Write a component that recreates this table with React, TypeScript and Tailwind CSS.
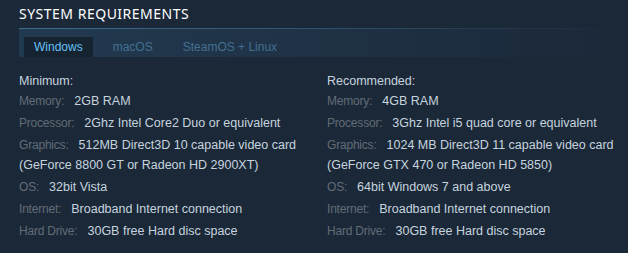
export default function App() {
  const min = [
    ["Memory:", "2GB RAM"],
    ["Processor:", "2Ghz Intel Core2 Duo or equivalent"],
    ["Graphics:", "512MB Direct3D 10 capable video card (GeForce 8800 GT or Radeon HD 2900XT)"],
    ["OS:", "32bit Vista"],
    ["Internet:", "Broadband Internet connection"],
    ["Hard Drive:", "30GB free Hard disc space"],
  ];
  const rec = [
    ["Memory:", "4GB RAM"],
    ["Processor:", "3Ghz Intel i5 quad core or equivalent"],
    ["Graphics:", "1024 MB Direct3D 11 capable video card (GeForce GTX 470 or Radeon HD 5850)"],
    ["OS:", "64bit Windows 7 and above"],
    ["Internet:", "Broadband Internet connection"],
    ["Hard Drive:", "30GB free Hard disc space"],
  ];

  const Column = ({ title, items, cls }: { title: string; items: string[][]; cls: string }) => (
    <div className={cls}>
      <div className="text-[#c6d4df] leading-5">{title}</div>
      <ul>
        {items.map(([k, v]) => (
          <li key={k} className="mt-[2px] first:mt-0 leading-5 text-[#c6d4df]">
            <span className="text-[#626c76] text-[12px] tracking-[-0.2px] mr-[10px]">{k}</span>{v}
          </li>
        ))}
      </ul>
    </div>
  );

  return (
    <div className="min-h-[253px] bg-[#1b2838] pl-[19px] pt-[4px]">
      <h2 className="text-[14px] leading-5 tracking-[0.5px] text-white uppercase pb-[4px] font-['Noto_Sans',sans-serif]">System Requirements</h2>
      <div className="h-px bg-gradient-to-r from-[#3e6c8c] via-[#2f526e] to-[#1b2838]" />
      <div className="flex h-[28px] items-end bg-gradient-to-r from-[#223a50] via-[#1f3145] to-[#1b2838] pl-[5px] font-['Liberation_Sans',Arial,sans-serif] text-[12px] leading-[20px]">
        <div className="h-[20px] px-[10px] bg-[#162330] text-[#67c1f5]">Windows</div>
        <div className="h-[20px] px-[10px] text-[#426f90] ml-[10px]">macOS</div>
        <div className="h-[20px] px-[10px] text-[#426f90] ml-[10px]">SteamOS + Linux</div>
      </div>
      <div className="flex pt-[14px] text-[12.5px] font-['Liberation_Sans',Arial,sans-serif]">
        <Column title="Minimum:" items={min} cls="w-[308px] shrink-0 pr-2" />
        <Column title="Recommended:" items={rec} cls="flex-1 min-w-0 pr-2" />
      </div>
    </div>
  );
}
